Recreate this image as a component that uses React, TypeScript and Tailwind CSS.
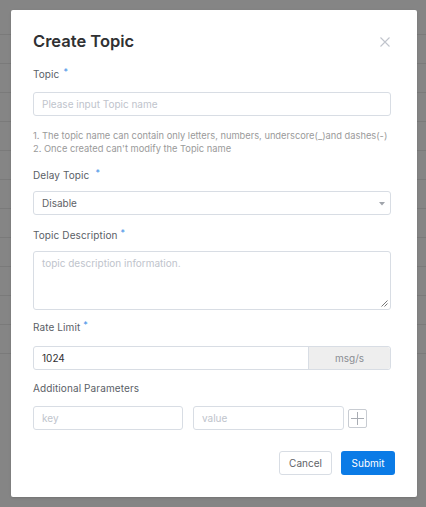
import React from "react";

const font = { fontFamily: "Inter, 'Liberation Sans', sans-serif" };

function Label({ text, gap = "ml-[3px]" }: { text: string; gap?: string }) {
  return (
    <div className="flex h-[16px] items-center text-[10px] leading-[16px] tracking-[0.1px] text-[#5a5e66]">
      <span>{text}</span>
      <span className={`${gap} -mt-[5px] text-[9px] leading-[10px] text-[#3a8ee6]`}>*</span>
    </div>
  );
}

export default function App() {
  const rows = Array.from({ length: 11 });
  return (
    <div className="relative h-[507px] w-[426px] overflow-hidden bg-[#858585]" style={font}>
      <div className="flex flex-col">
        <div className="h-[35px] border-b border-[#7a7a7a]" />
        {rows.map((_, i) => (
          <div key={i} className="h-[29px] border-b border-[#7a7a7a]" />
        ))}
      </div>

      <div className="absolute left-[11px] top-[10px] flex h-[487px] w-[406px] flex-col rounded-[2px] bg-white pl-[22px] pr-[26px] shadow-sm">
        <div className="relative mt-[19px] flex h-[24px] items-center">
          <span className="text-[16.5px] font-semibold leading-[24px] text-[#303133]">Create Topic</span>
          <svg className="absolute right-[1px] top-[8px]" width="10" height="10" viewBox="0 0 10 10">
            <path d="M0.5 0.5 L9.5 9.5 M9.5 0.5 L0.5 9.5" stroke="#c0c4cc" strokeWidth="1.1" />
          </svg>
        </div>

        <div className="mt-[13px]">
          <Label text="Topic" gap="ml-[4px]" />
        </div>
        <div className="mt-[10px] flex h-[24px] items-center rounded-[3px] border border-[#d8dde4] px-[8px] text-[10px] text-[#c0c4cc]">
          Please input Topic name
        </div>

        <div className="mt-[13px] text-[9.3px] leading-[13px] text-[#9a9a9a]">
          <div>1. The topic name can contain only letters, numbers, underscore(_)and dashes(-)</div>
          <div>2. Once created can't modify the Topic name</div>
        </div>

        <div className="mt-[12px]">
          <Label text="Delay Topic" gap="ml-[6px]" />
        </div>
        <div className="relative mt-[8px] flex h-[24px] items-center rounded-[3px] border border-[#d8dde4] px-[8px] text-[10px] text-[#606266]">
          Disable
          <svg className="absolute right-[5px] top-[10px]" width="6" height="4" viewBox="0 0 6 4">
            <path d="M0 0 L6 0 L3 3.5 Z" fill="#a0a4ab" />
          </svg>
        </div>

        <div className="mt-[12px]">
          <Label text="Topic Description" />
        </div>
        <div className="relative mt-[8px] h-[59px] rounded-[3px] border border-[#d8dde4] px-[8px] pt-[4px] text-[10px] leading-[14px] text-[#c0c4cc]">
          topic description information.
          <svg className="absolute bottom-[2px] right-[2px]" width="7" height="7" viewBox="0 0 7 7">
            <path d="M6.5 0.5 L0.5 6.5 M6.5 3.5 L3.5 6.5" stroke="#555" strokeWidth="0.8" />
          </svg>
        </div>

        <div className="mt-[9px]">
          <Label text="Rate Limit" />
        </div>
        <div className="mt-[11px] flex h-[24px] rounded-[3px] border border-[#d8dde4] text-[10px]">
          <div className="flex flex-1 items-center px-[8px] text-[#303133]">1024</div>
          <div className="flex w-[82px] items-center justify-center rounded-r-[3px] border-l border-[#d8dde4] bg-[#eeeeee] text-[#8a8d93]">
            msg/s
          </div>
        </div>

        <div className="mt-[10px] flex h-[16px] items-center text-[10px] leading-[16px] tracking-[0.1px] text-[#5a5e66]">
          Additional Parameters
        </div>
        <div className="mt-[10px] flex h-[24px] items-center">
          <div className="flex h-[24px] w-[150px] items-center rounded-[3px] border border-[#d8dde4] px-[8px] text-[10px] text-[#c0c4cc]">
            key
          </div>
          <div className="ml-[10px] flex h-[24px] w-[151px] items-center rounded-[3px] border border-[#d8dde4] px-[8px] text-[10px] text-[#c0c4cc]">
            value
          </div>
          <div className="ml-[4px] flex h-[19px] w-[19px] items-center justify-center rounded-[2px] border border-[#c8ccd2]">
            <svg width="13" height="13" viewBox="0 0 13 13">
              <path d="M6.5 0 V13 M0 6.5 H13" stroke="#a8acb3" strokeWidth="1" />
            </svg>
          </div>
        </div>

        <div className="-mr-[4px] mt-[21px] flex justify-end gap-[9px]">
          <div className="flex h-[24px] w-[53px] items-center justify-center rounded-[3px] border border-[#d8dde4] text-[10px] text-[#606266]">
            Cancel
          </div>
          <div className="flex h-[24px] w-[54px] items-center justify-center rounded-[3px] bg-[#0b7be6] text-[10px] text-white">
            Submit
          </div>
        </div>
      </div>
    </div>
  );
}
